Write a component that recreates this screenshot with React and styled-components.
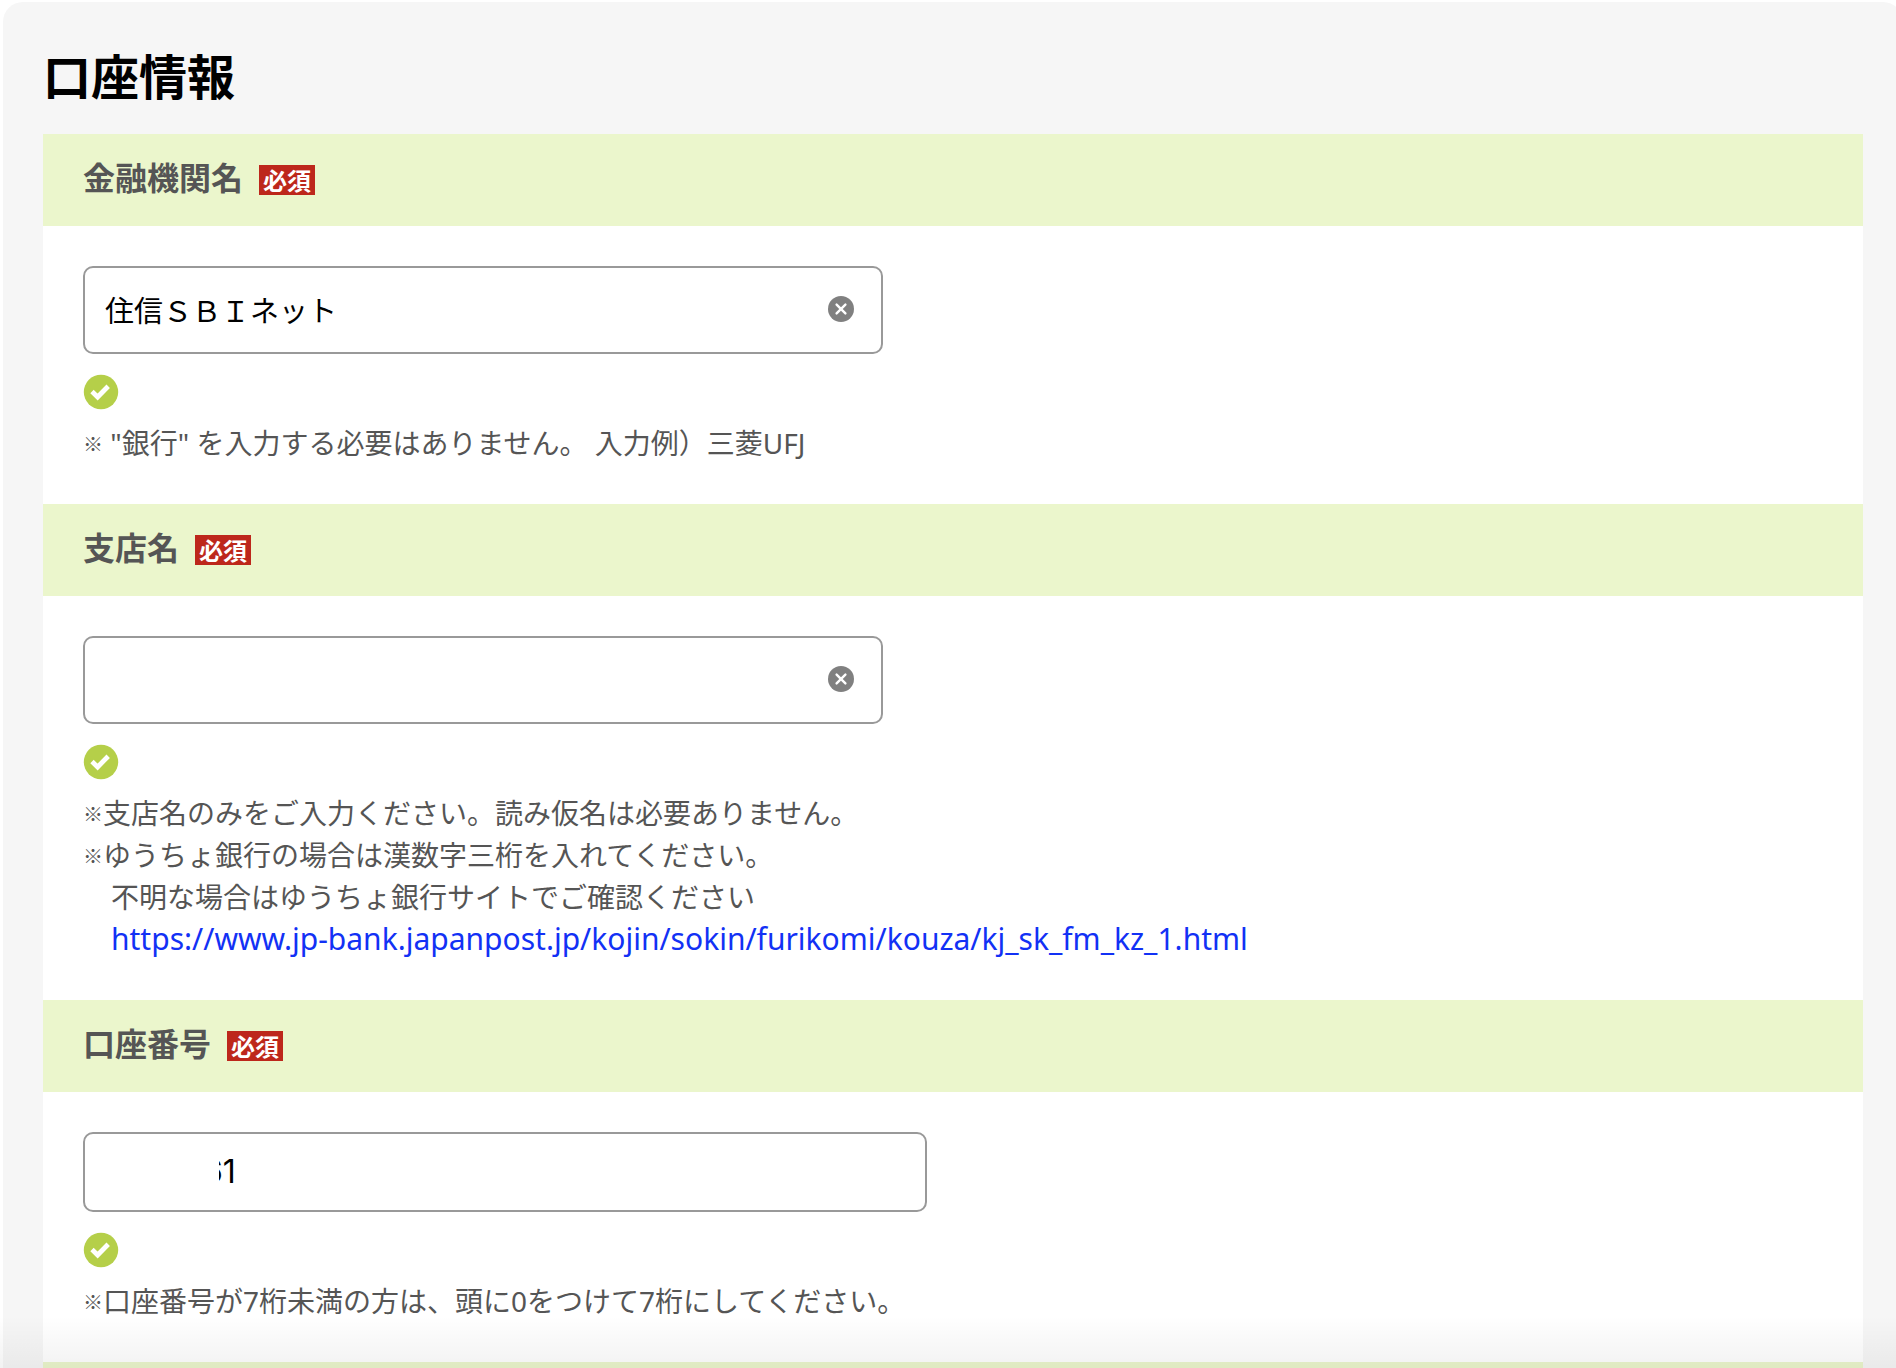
import { useState } from "react"
import styled, { createGlobalStyle } from "styled-components"

const FORM_LINK = "https://www.jp-bank.japanpost.jp/kojin/sokin/furikomi/kouza/kj_sk_fm_kz_1.html"

const CheckIcon = () => (
  <svg width="36" height="36" viewBox="0 0 36 36" role="img" aria-label="OK">
    <circle cx="18" cy="18" r="17.2" fill="#b5cf49" />
    <path d="M9 17.6 L14.6 23 L25.2 12.2" fill="none" stroke="#fff" strokeWidth="4.8" />
  </svg>
)

const ClearIcon = () => (
  <svg width="26" height="26" viewBox="0 0 26 26" aria-hidden="true">
    <circle cx="13" cy="13" r="13" fill="#808080" />
    <path d="M8.6 8.6 L17.4 17.4 M17.4 8.6 L8.6 17.4" stroke="#fff" strokeWidth="2.4" strokeLinecap="round" />
  </svg>
)

const Field = ({ id, label, children }) => (
  <section>
    <FieldHead>
      <label htmlFor={id}>{label}</label>
      <Required>必須</Required>
    </FieldHead>
    <FieldBody>{children}</FieldBody>
  </section>
)

const ClearableInput = ({ id, initial }) => {
  const [value, setValue] = useState(initial)
  return (
    <InputBox>
      <input id={id} type="text" value={value} onChange={(e) => setValue(e.target.value)} />
      <button type="button" aria-label="クリア" onClick={() => setValue("")}>
        <ClearIcon />
      </button>
    </InputBox>
  )
}

const App = () => {
  return (
    <>
      <GlobalStyle />
      <Page>
        <Panel>
          <h1>口座情報</h1>
          <Field id="bank" label="金融機関名">
            <ClearableInput id="bank" initial="住信ＳＢＩネット" />
            <Status><CheckIcon /></Status>
            <Note><Mark>※</Mark> "銀行" を入力する必要はありません。 入力例）三菱UFJ</Note>
          </Field>
          <Field id="branch" label="支店名">
            <ClearableInput id="branch" initial="" />
            <Status><CheckIcon /></Status>
            <Note><Mark>※</Mark>支店名のみをご入力ください。読み仮名は必要ありません。</Note>
            <Note><Mark>※</Mark>ゆうちょ銀行の場合は漢数字三桁を入れてください。</Note>
            <Note $indent>不明な場合はゆうちょ銀行サイトでご確認ください</Note>
            <Note $indent><a href={FORM_LINK}>{FORM_LINK}</a></Note>
          </Field>
          <Field id="number" label="口座番号">
            <InputBox $wide>
              <input id="number" type="text" inputMode="numeric" defaultValue="61" />
              <Redaction />
            </InputBox>
            <Status><CheckIcon /></Status>
            <Note><Mark>※</Mark>口座番号が7桁未満の方は、頭に0をつけて7桁にしてください。</Note>
          </Field>
          <NextHead />
        </Panel>
        <BottomShade />
      </Page>
    </>
  )
}

export default App

const GlobalStyle = createGlobalStyle`
  * {
    box-sizing: border-box;
  }
  body {
    margin: 0;
    background: #fff;
    color: #555;
    font-family: "Noto Sans", "Noto Sans CJK JP", sans-serif;
    font-size: 28px;
    line-height: 42px;
  }
`

const Page = styled.main`
  position: relative;
  min-height: 100vh;
  padding: 2px 0 0 3px;
  overflow: hidden;
`

const Panel = styled.div`
  margin-right: -7px;
  padding: 36px 40px 0;
  background: #f6f6f6;
  border-radius: 20px 20px 0 0;
  h1 {
    margin: 0 0 24px;
    color: #000;
    font-family: "Noto Sans CJK JP", sans-serif;
    font-size: 48px;
    font-weight: 700;
    line-height: 72px;
  }
`

const FieldHead = styled.div`
  display: flex;
  align-items: center;
  gap: 16px;
  padding: 18px 40px 26px;
  background: #ebf6cc;
  font-family: "Noto Sans CJK JP", sans-serif;
  font-size: 32px;
  font-weight: 700;
  line-height: 48px;
`

const Required = styled.span`
  margin-top: 8px;
  padding: 0 4px;
  background: #bd271b;
  color: #fff;
  font-size: 24px;
  line-height: 30px;
`

const FieldBody = styled.div`
  padding: 40px;
  background: #fff;
`

const InputBox = styled.div`
  position: relative;
  display: flex;
  align-items: center;
  max-width: ${(p) => (p.$wide ? "844px" : "800px")};
  height: ${(p) => (p.$wide ? "80px" : "88px")};
  padding-right: 27px;
  border: 2px solid #999;
  border-radius: 10px;
  input {
    flex: 1;
    min-width: 0;
    height: 100%;
    padding: 0 0 2px ${(p) => (p.$wide ? "118px" : "20px")};
    border: 0;
    outline: 0;
    background: none;
    color: #000;
    font-family: ${(p) => (p.$wide ? "Inter, sans-serif" : '"Noto Sans CJK JP", sans-serif')};
    font-size: ${(p) => (p.$wide ? "32px" : "29px")};
  }
  button {
    display: flex;
    padding: 0 0 2px;
    border: 0;
    background: none;
    cursor: pointer;
  }
`

// hides the leading digits of the account number
const Redaction = styled.span`
  position: absolute;
  top: 8px;
  bottom: 8px;
  left: 20px;
  width: 114px;
  background: #fff;
`

const Status = styled.div`
  display: flex;
  padding: 20px 0 12px;
`

const Note = styled.p`
  margin: 0;
  padding-left: ${(p) => (p.$indent ? "28px" : "0")};
  a {
    color: #1231f5;
    font-size: 30px;
    text-decoration: none;
    overflow-wrap: anywhere;
  }
`

const Mark = styled.span`
  font-family: "Noto Sans CJK JP", sans-serif;
  font-size: 20px;
  line-height: 1;
  vertical-align: 2px;
`

const NextHead = styled.div`
  height: 6px;
  background: #ebf6cc;
`

const BottomShade = styled.div`
  position: absolute;
  right: 0;
  bottom: 0;
  left: 0;
  height: 52px;
  background: linear-gradient(rgba(0, 0, 0, 0), rgba(0, 0, 0, 0.05));
  pointer-events: none;
`
